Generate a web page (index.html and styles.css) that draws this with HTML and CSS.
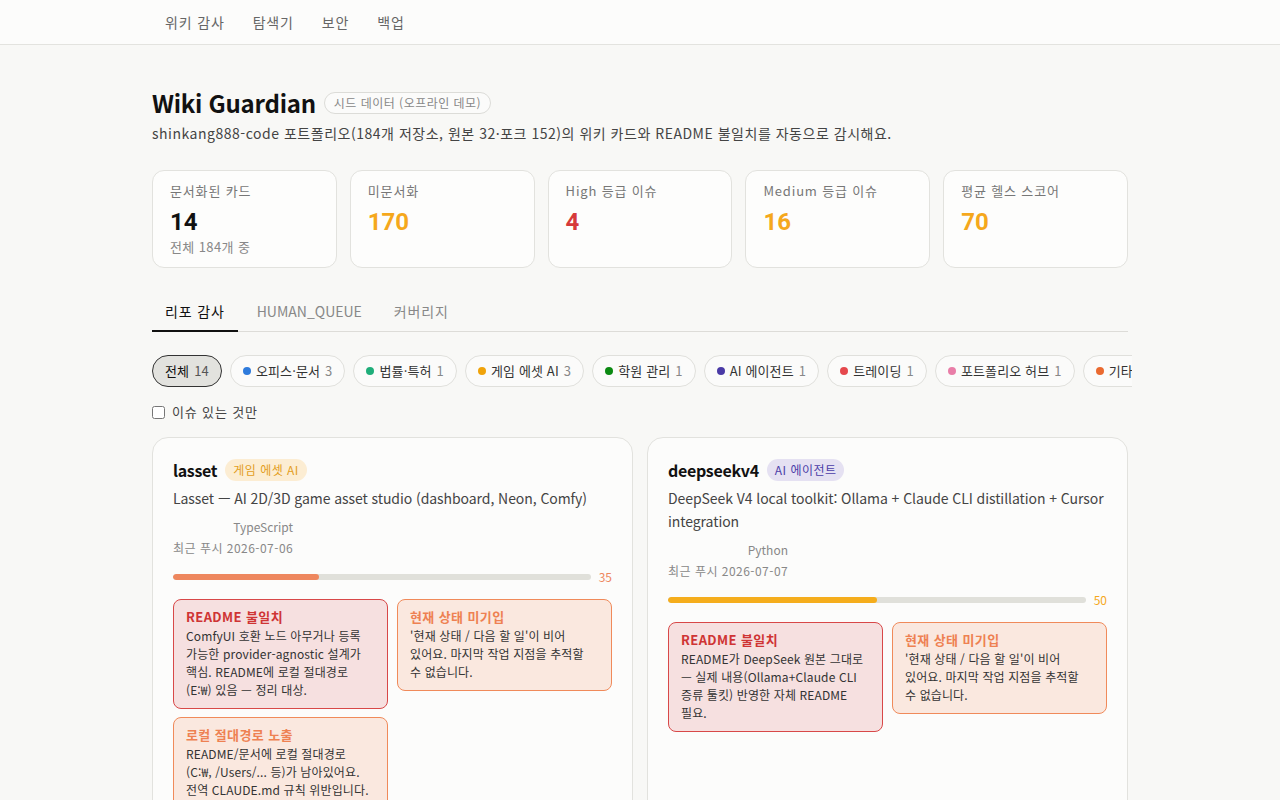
FILE: index.html
```html
<!DOCTYPE html>
<html lang="ko">
<head>
  <meta charset="UTF-8">
  <meta name="viewport" content="width=device-width, initial-scale=1.0">
  <title>Wiki Guardian</title>
  <link rel="stylesheet" href="styles.css">
</head>
<body>
  <header class="topbar">
    <nav class="topnav">
      <a href="#">위키 감사</a>
      <a href="#">탐색기</a>
      <a href="#">보안</a>
      <a href="#">백업</a>
    </nav>
  </header>

  <main class="page">
    <div class="title-row">
      <h1>Wiki Guardian</h1>
      <span class="seed">시드 데이터 (오프라인 데모)</span>
    </div>
    <p class="lead">shinkang888-code 포트폴리오(184개 저장소, 원본 32·포크 152)의 위키 카드와 README 불일치를 자동으로 감시해요.</p>

    <section class="stats">
      <div class="stat">
        <div class="stat-label">문서화된 카드</div>
        <div class="stat-value">14</div>
        <div class="stat-sub">전체 184개 중</div>
      </div>
      <div class="stat">
        <div class="stat-label">미문서화</div>
        <div class="stat-value amber">170</div>
      </div>
      <div class="stat">
        <div class="stat-label">High 등급 이슈</div>
        <div class="stat-value red">4</div>
      </div>
      <div class="stat">
        <div class="stat-label">Medium 등급 이슈</div>
        <div class="stat-value amber">16</div>
      </div>
      <div class="stat">
        <div class="stat-label">평균 헬스 스코어</div>
        <div class="stat-value amber">70</div>
      </div>
    </section>

    <div class="tabs">
      <a href="#" class="tab active">리포 감사</a>
      <a href="#" class="tab latin">HUMAN_QUEUE</a>
      <a href="#" class="tab">커버리지</a>
    </div>

    <div class="chips">
      <button class="chip active">전체 <span class="cnt">14</span></button>
      <button class="chip"><i class="dot office"></i>오피스·문서 <span class="cnt">3</span></button>
      <button class="chip"><i class="dot legal"></i>법률·특허 <span class="cnt">1</span></button>
      <button class="chip"><i class="dot game"></i>게임 에셋 AI <span class="cnt">3</span></button>
      <button class="chip"><i class="dot academy"></i>학원 관리 <span class="cnt">1</span></button>
      <button class="chip"><i class="dot agent"></i>AI 에이전트 <span class="cnt">1</span></button>
      <button class="chip"><i class="dot trading"></i>트레이딩 <span class="cnt">1</span></button>
      <button class="chip"><i class="dot hub"></i>포트폴리오 허브 <span class="cnt">1</span></button>
      <button class="chip"><i class="dot etc"></i>기타 <span class="cnt">5</span></button>
    </div>

    <label class="only-issues"><input type="checkbox"> 이슈 있는 것만</label>

    <section class="repos">
      <article class="repo">
        <div class="repo-head">
          <h2>lasset</h2>
          <span class="cat cat-game">게임 에셋 AI</span>
        </div>
        <p class="desc">Lasset — AI 2D/3D game asset studio (dashboard, Neon, Comfy)</p>
        <div class="lang">TypeScript</div>
        <div class="pushed">최근 푸시 2026-07-06</div>
        <div class="health">
          <div class="bar"><div class="fill coral" style="width: 35%"></div></div>
          <span class="score coral-text">35</span>
        </div>
        <div class="issues">
          <div class="issue high">
            <h3>README 불일치</h3>
            <p>ComfyUI 호환 노드 아무거나 등록 가능한 provider-agnostic 설계가 핵심. README에 로컬 절대경로 (E:&#8288;₩) 있음 — 정리 대상.</p>
          </div>
          <div class="issue medium">
            <h3>현재 상태 미기입</h3>
            <p>'현재 상태 / 다음 할 일'이 비어 있어요. 마지막 작업 지점을 추적할 수&nbsp;없습니다.</p>
          </div>
          <div class="issue medium">
            <h3>로컬 절대경로 노출</h3>
            <p>README/문서에 로컬 절대경로 (C:&#8288;₩, /Users/... 등)가 남아있어요. 전역 CLAUDE.md 규칙 위반입니다.</p>
          </div>
        </div>
      </article>

      <article class="repo">
        <div class="repo-head">
          <h2>deepseekv4</h2>
          <span class="cat cat-agent">AI 에이전트</span>
        </div>
        <p class="desc">DeepSeek V4 local toolkit: Ollama + Claude CLI distillation + Cursor integration</p>
        <div class="lang">Python</div>
        <div class="pushed">최근 푸시 2026-07-07</div>
        <div class="health">
          <div class="bar"><div class="fill amber-bg" style="width: 50%"></div></div>
          <span class="score amber">50</span>
        </div>
        <div class="issues">
          <div class="issue high">
            <h3>README 불일치</h3>
            <p>README가 DeepSeek 원본 그대로 — 실제 내용(Ollama+Claude CLI 증류 툴킷) 반영한 자체 README 필요.</p>
          </div>
          <div class="issue medium">
            <h3>현재 상태 미기입</h3>
            <p>'현재 상태 / 다음 할 일'이 비어 있어요. 마지막 작업 지점을 추적할 수&nbsp;없습니다.</p>
          </div>
        </div>
      </article>
    </section>
  </main>
</body>
</html>
```

FILE: styles.css
```css
body {
    margin: 0;
    background: #f8f8f6;
    color: #111;
    font-family: "Noto Sans CJK KR", "Noto Sans", sans-serif;
    font-size: 14px;
    /* hangul reads a little loose */
    letter-spacing: 0.06em;
    word-break: keep-all;
}
a {
    text-decoration: none;
    color: inherit;
}

/* top navigation */
.topbar {
    background: #fcfcfb;
    border-bottom: 1px solid #e3e3df;
}
.topnav {
    width: 976px;
    margin: 0 auto;
    display: flex;
    height: 44px;
    align-items: center;
}
.topnav a {
    padding: 0 14px;
    color: #666;
    font-size: 14px;
    line-height: 20px;
}
.topnav a:first-child {
    padding-left: 13px;
}

.page {
    width: 976px;
    margin: 0 auto;
    padding-top: 43px;
}

/* heading */
.title-row {
    display: flex;
    align-items: center;
    gap: 8px;
}
h1 {
    margin: 0;
    font-size: 24px;
    line-height: 30px;
    font-weight: 700;
    letter-spacing: -0.01em;
}
.seed {
    border: 1px solid #dcdcd8;
    border-radius: 11px;
    padding: 0 9px;
    line-height: 20px;
    font-size: 12px;
    letter-spacing: 0.04em;
    color: #888;
    background: #fbfbfa;
}
.lead {
    margin: 5px 0 0;
    font-size: 14px;
    line-height: 20px;
    color: #444;
    letter-spacing: 0.037em;
}

/* stat cards */
.stats {
    display: grid;
    grid-template-columns: repeat(5, 1fr);
    gap: 13px;
    margin-top: 27px;
}
.stat {
    height: 98px;
    box-sizing: border-box;
    border: 1px solid #e2e2de;
    border-radius: 12px;
    background: #fdfdfc;
    padding: 11px 17px;
}
.stat-label {
    font-size: 13px;
    line-height: 18px;
    color: #777;
}
.stat-value {
    margin-top: 8px;
    font-family: Roboto, "Noto Sans CJK KR", sans-serif;
    font-size: 24px;
    line-height: 28px;
    font-weight: 700;
    letter-spacing: 0;
    color: #111;
}
.stat-sub {
    margin-top: 2px;
    font-size: 13px;
    line-height: 18px;
    letter-spacing: 0.03em;
    color: #888;
}
.amber { color: #f5a81c; }
.red { color: #d63a3a; }

/* tabs */
.tabs {
    display: flex;
    gap: 6px;
    margin-top: 32px;
    border-bottom: 1px solid #dddcd8;
}
.tab {
    padding: 1px 13px 9px;
    font-size: 14px;
    line-height: 20px;
    color: #888;
    border-bottom: 2px solid transparent;
    margin-bottom: -1px;
}
.tab.latin {
    letter-spacing: 0;
}
.tab.active {
    color: #111;
    border-bottom-color: #111;
}

/* category chips */
.chips {
    display: flex;
    gap: 8px;
    margin-top: 23px;
    width: 980px;
    overflow: hidden;
}
.chip {
    flex: none;
    display: flex;
    align-items: center;
    gap: 5px;
    font: inherit;
    font-size: 13px;
    line-height: 20px;
    letter-spacing: 0.01em;
    padding: 5px 12px;
    border: 1px solid #e0e0dc;
    border-radius: 16px;
    background: #fbfbfa;
    color: #333;
}
.chip .cnt {
    color: #888;
}
.chip.active {
    background: #e2e2de;
    border-color: #333;
    color: #111;
}
.chip.active .cnt {
    color: #555;
}
.dot {
    width: 8px;
    height: 8px;
    border-radius: 50%;
}
.dot.office { background: #2f7bdc; }
.dot.legal { background: #1fae7a; }
.dot.game { background: #f0a30a; }
.dot.academy { background: #0b8a12; }
.dot.agent { background: #4a3aa6; }
.dot.trading { background: #e5484d; }
.dot.hub { background: #e97ea8; }
.dot.etc { background: #ea6a30; }

.only-issues {
    display: flex;
    align-items: center;
    gap: 7px;
    margin-top: 16px;
    font-size: 13px;
    line-height: 18px;
    color: #444;
}
.only-issues input {
    margin: 0;
    width: 13px;
    height: 13px;
}

/* repo cards */
.repos {
    display: grid;
    grid-template-columns: 1fr 1fr;
    gap: 14px;
    margin-top: 16px;
}
.repo {
    border: 1px solid #e2e2de;
    border-radius: 16px;
    background: #fcfcfb;
    padding: 20px 20px 24px;
}
.repo-head {
    display: flex;
    align-items: center;
    gap: 8px;
}
h2 {
    margin: 0;
    font-size: 16px;
    line-height: 24px;
    font-weight: 700;
    letter-spacing: -0.02em;
}
.cat {
    font-size: 12px;
    line-height: 22px;
    letter-spacing: 0.04em;
    padding: 0 8px;
    border-radius: 11px;
}
.cat-game {
    background: #fcedd3;
    color: #e39d1c;
}
.cat-agent {
    background: #e5e1f2;
    color: #4b3da8;
}
.desc {
    margin: 5px 0 0;
    font-size: 14px;
    line-height: 23px;
    letter-spacing: -0.005em;
    color: #444;
}
.lang {
    width: 120px;
    text-align: right;
    margin-top: 7px;
    font-size: 12px;
    line-height: 20px;
    letter-spacing: 0;
    color: #888;
}
.pushed {
    margin-top: 1px;
    font-size: 12px;
    line-height: 20px;
    letter-spacing: 0.04em;
    color: #888;
}
.health {
    display: flex;
    align-items: center;
    gap: 8px;
    margin-top: 12px;
}
.bar {
    flex: 1;
    height: 6px;
    border-radius: 3px;
    background: #e0e0da;
    overflow: hidden;
}
.fill {
    height: 100%;
    border-radius: 3px;
}
.fill.coral { background: #ee875e; }
.fill.amber-bg { background: #f5ad1c; }
.score {
    font-size: 12px;
    line-height: 14px;
    letter-spacing: 0;
}
.coral-text { color: #ee875e; }

.issues {
    display: grid;
    grid-template-columns: 1fr 1fr;
    gap: 8px 9px;
    margin-top: 15px;
    align-items: start;
}
.issue {
    border: 1px solid;
    border-radius: 8px;
    padding: 8px 12px 9px;
}
.issue h3 {
    margin: 0 0 1px;
    font-size: 13px;
    line-height: 18px;
    font-weight: 700;
    letter-spacing: 0.03em;
}
.issue p {
    margin: 0;
    font-size: 12px;
    line-height: 18px;
    letter-spacing: 0.01em;
    color: #333;
}
.issue.high {
    background: #f6e0e0;
    border-color: #d84848;
}
.issue.high h3 { color: #cf3434; }
.issue.medium {
    background: #fae8df;
    border-color: #f08a5a;
}
.issue.medium h3 { color: #ee8152; }
```
